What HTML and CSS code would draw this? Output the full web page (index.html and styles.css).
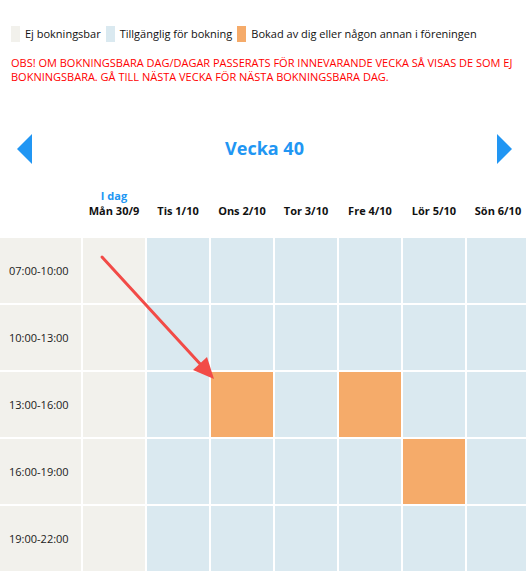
FILE: index.html
```html
<!DOCTYPE html>
<html lang="sv">
<head>
<meta charset="utf-8">
<title>Bokning</title>
<link rel="stylesheet" href="styles.css">
</head>
<body>
<div class="page">
  <div class="legend">
    <div class="legend-item"><span class="swatch swatch-closed"></span>Ej bokningsbar</div>
    <div class="legend-item"><span class="swatch swatch-free"></span>Tillgänglig för bokning</div>
    <div class="legend-item"><span class="swatch swatch-booked"></span>Bokad av dig eller någon annan i föreningen</div>
  </div>
  <p class="notice">OBS! OM BOKNINGSBARA DAG/DAGAR PASSERATS FÖR INNEVARANDE VECKA SÅ VISAS DE SOM EJ BOKNINGSBARA. GÅ TILL NÄSTA VECKA FÖR NÄSTA BOKNINGSBARA DAG.</p>

  <div class="week-nav">
    <span class="nav-arrow nav-prev"></span>
    <h1 class="week-title">Vecka 40</h1>
    <span class="nav-arrow nav-next"></span>
  </div>

  <div class="schedule">
    <div class="grid head">
      <div></div>
      <div class="day"><span class="today">I dag</span>Mån 30/9</div>
      <div class="day">Tis 1/10</div>
      <div class="day">Ons 2/10</div>
      <div class="day">Tor 3/10</div>
      <div class="day">Fre 4/10</div>
      <div class="day">Lör 5/10</div>
      <div class="day">Sön 6/10</div>
    </div>
    <div class="grid body">
      <div class="time">07:00-10:00</div>
      <div class="cell closed"></div><div class="cell free"></div><div class="cell free"></div><div class="cell free"></div><div class="cell free"></div><div class="cell free"></div><div class="cell free"></div>

      <div class="time">10:00-13:00</div>
      <div class="cell closed"></div><div class="cell free"></div><div class="cell free"></div><div class="cell free"></div><div class="cell free"></div><div class="cell free"></div><div class="cell free"></div>

      <div class="time">13:00-16:00</div>
      <div class="cell closed"></div><div class="cell free"></div><div class="cell booked"></div><div class="cell free"></div><div class="cell booked"></div><div class="cell free"></div><div class="cell free"></div>

      <div class="time">16:00-19:00</div>
      <div class="cell closed"></div><div class="cell free"></div><div class="cell free"></div><div class="cell free"></div><div class="cell free"></div><div class="cell booked"></div><div class="cell free"></div>

      <div class="time">19:00-22:00</div>
      <div class="cell closed"></div><div class="cell free"></div><div class="cell free"></div><div class="cell free"></div><div class="cell free"></div><div class="cell free"></div><div class="cell free"></div>
    </div>
    <svg class="annotation" width="140" height="140" viewBox="0 0 140 140">
      <line x1="4" y1="4" x2="104" y2="113" stroke="#f24b47" stroke-width="3" stroke-linecap="round"/>
      <polygon points="116,126 95,117 109,104" fill="#f24b47"/>
    </svg>
  </div>
</div>
</body>
</html>
```

FILE: styles.css
```css
html, body {
  margin: 0;
  padding: 0;
  background: #fff;
  overflow: hidden;
}

body {
  font-family: "Open Sans", "DejaVu Sans", sans-serif;
  color: #111;
}

.page {
  width: 526px;
  overflow: hidden;
}

.legend {
  display: flex;
  gap: 5px;
  padding: 26px 0 0 11px;
  font-size: 11px;
  line-height: 16px;
}

.legend-item {
  display: flex;
  align-items: center;
  gap: 5px;
}

.swatch {
  display: inline-block;
  width: 9px;
  height: 16px;
}

.swatch-closed { background: #f2f1ec; }
.swatch-free { background: #dae9f0; }
.swatch-booked { background: #f5ab6a; }

.notice {
  margin: 14px 0 0 11px;
  color: #ff0000;
  font-size: 11px;
  line-height: 14px;
  padding-right: 10px;
}

.week-nav {
  display: flex;
  align-items: center;
  justify-content: space-between;
  padding: 0 14px 0 17px;
  margin-top: 50px;
  height: 30px;
}

.nav-arrow {
  width: 0;
  height: 0;
  border-top: 15px solid transparent;
  border-bottom: 15px solid transparent;
}

.nav-prev { border-right: 15px solid #2196f3; }
.nav-next { border-left: 15px solid #2196f3; }

.week-title {
  margin: 0 0 2px;
  font-size: 18px;
  font-weight: 700;
  color: #2196f3;
  line-height: 28px;
}

.schedule {
  position: relative;
  margin-top: 10px;
}

.grid {
  display: grid;
  grid-template-columns: 81px repeat(7, 62px);
  column-gap: 2px;
  width: 529px;
}

.head {
  height: 44px;
  align-items: end;
  padding-bottom: 20px;
}

.day {
  display: flex;
  flex-direction: column;
  align-items: center;
  font-size: 11px;
  font-weight: 700;
  line-height: 15px;
  color: #111;
}

.today {
  color: #2196f3;
}

.body {
  grid-auto-rows: 65px;
  row-gap: 2px;
}

.time {
  background: #f2f1ec;
  display: flex;
  align-items: center;
  padding-left: 9px;
  font-size: 11px;
  color: #1a1a1a;
}

.cell.closed { background: #f2f1ec; }
.cell.free { background: #dae9f0; }
.cell.booked { background: #f5ab6a; }

.annotation {
  position: absolute;
  left: 98px;
  top: 79px;
  overflow: visible;
}
```
